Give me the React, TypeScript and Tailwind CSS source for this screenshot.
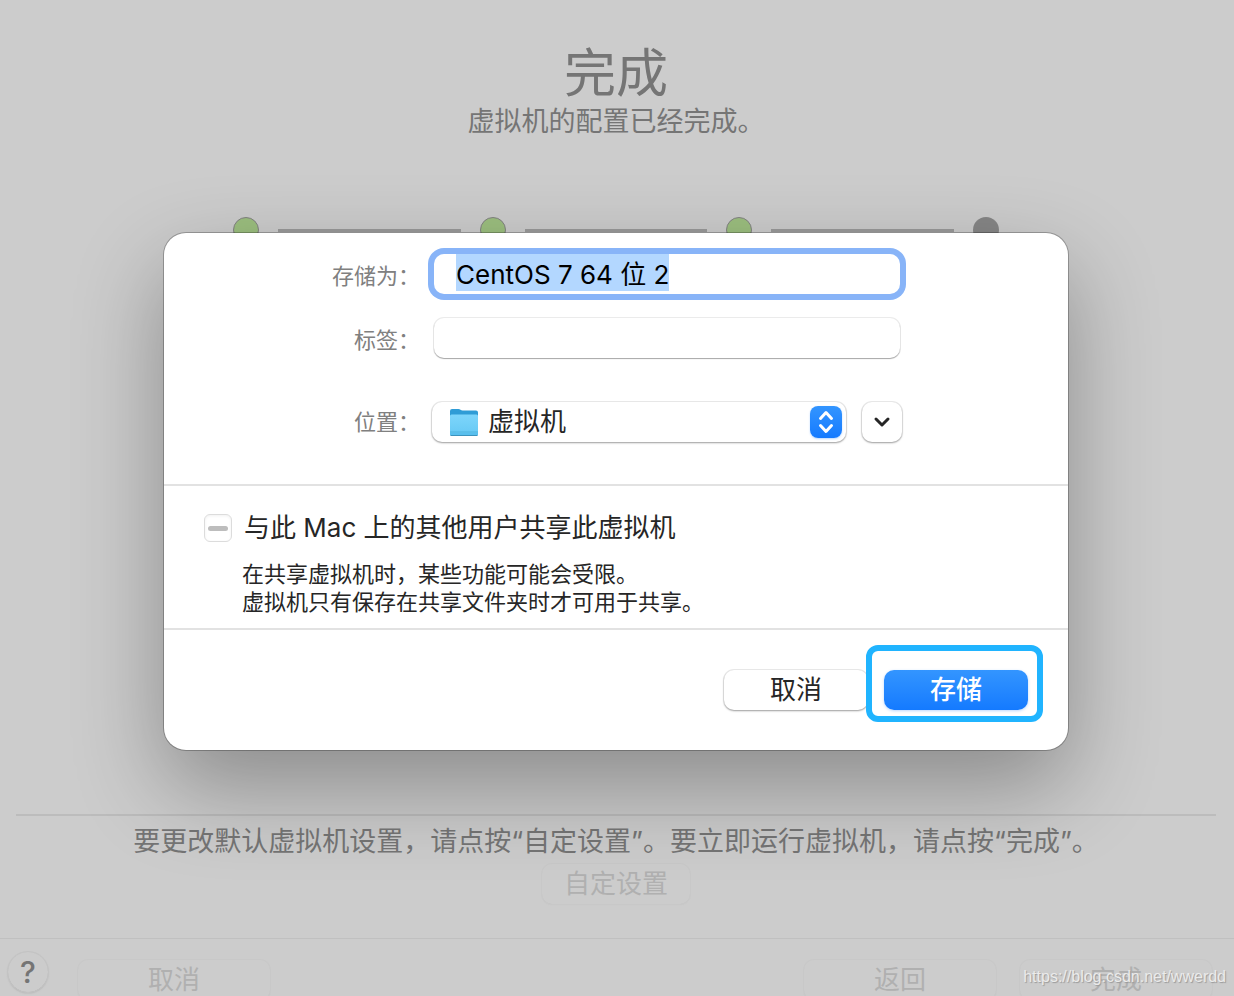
import { useEffect, useRef } from 'react'
import { ChevronDown } from 'lucide-react'

const FolderIcon = () => (
  <svg viewBox="0 0 30 30" className="pointer-events-none absolute left-[17px] top-1.5 h-[30px] w-[30px]">
    <defs>
      <linearGradient id="folder" x1="0" y1="0" x2="0" y2="1">
        <stop offset="0" stopColor="#7dd5fb" />
        <stop offset="1" stopColor="#66c9f4" />
      </linearGradient>
    </defs>
    <path d="M1 3a2 2 0 0 1 2-2h6.500c1.500 0 2.500 1.500 4 1.500H27a2 2 0 0 1 2 2V10H1z" fill="#2f9cd6" />
    <path d="M1 8a1.500 1.500 0 0 1 1.500-1.500h25A1.500 1.500 0 0 1 29 8v19H1z" fill="url(#folder)" />
    <path d="M1 24h28" stroke="#4fb2de" strokeWidth="1" />
    <path d="M1 25h28v1.500a1 1 0 0 1-1 1H2a1 1 0 0 1-1-1z" fill="#58bfee" />
    <path d="M1.500 27.500h27" stroke="#3c93bd" strokeWidth="1" />
  </svg>
)

const UpDownIcon = () => (
  <span className="pointer-events-none absolute right-1 top-1 flex h-8 w-8 items-center justify-center rounded-lg bg-linear-to-b from-[#3395ff] to-[#147aff] shadow-[0_1px_2px_rgba(20,122,255,0.3)]">
    <svg viewBox="0 0 32 32" className="h-8 w-8" fill="none" stroke="#fff" strokeWidth="3" strokeLinecap="round" strokeLinejoin="round">
      <path d="M10.500 12.500 16 6.500l5.500 6M10.500 19.500l5.500 6 5.500-6" />
    </svg>
  </span>
)

const Steps = () => {
  const line = <span className="h-[3px] flex-1 bg-[#9a9a9a]" />
  const done = <span className="h-[26px] w-[26px] rounded-full border border-[#828282] bg-[#9cbf7f]" />
  return (
    <div className="mx-auto mt-[77px] flex w-[766px] max-w-full items-center gap-[19px]">
      {done}
      {line}
      {done}
      {line}
      {done}
      {line}
      <span className="h-[26px] w-[26px] rounded-full bg-[#868686]" />
    </div>
  )
}

const SaveSheet = () => {
  const nameRef = useRef<HTMLInputElement>(null)
  const shareRef = useRef<HTMLInputElement>(null)

  useEffect(() => {
    nameRef.current?.focus()
    nameRef.current?.select()
    if (shareRef.current) shareRef.current.indeterminate = true
  }, [])

  const label = 'w-[256px] shrink-0 text-right text-[22px] leading-[44px] text-[#808080]'

  return (
    <div
      role="dialog"
      aria-label="存储为"
      className="w-[904px] max-w-full rounded-[22px] bg-white shadow-[0_0_0_1px_rgba(0,0,0,0.25),0_36px_90px_rgba(0,0,0,0.32)]"
    >
      {/* Name, tags and location */}
      <div className="border-b-2 border-[#e2e2e2] pb-10 pt-[21px]">
        <div className="flex items-start gap-3.5">
          <label htmlFor="name" className={label}>存储为：</label>
          <input
            id="name"
            ref={nameRef}
            defaultValue="CentOS 7 64 位 2"
            className="h-10 w-[466px] rounded-[10px] bg-white px-[22px] pb-1 text-[26px] text-black outline-none ring-6 ring-[#88b4f8] selection:bg-[#b3d7ff] selection:text-black"
          />
        </div>
        <div className="mt-5 flex items-start gap-3.5">
          <label htmlFor="tags" className={label}>标签：</label>
          <input
            id="tags"
            className="h-10 w-[466px] rounded-[10px] bg-white px-[22px] text-[26px] shadow-[0_1px_1px_#a8a8a8,0_0_0_1px_#ebebeb] outline-none"
          />
        </div>
        <div className="mt-[38px] flex items-center gap-3">
          <label htmlFor="place" className={label}>位置：</label>
          <div className="relative mr-1">
            <select
              id="place"
              className="block h-10 w-[414px] appearance-none rounded-[10px] bg-white pl-14 pr-12 text-[26px] leading-10 text-[#262626] shadow-[0_1px_2px_#a0a0a0,0_0_0_1px_#ebebeb] outline-none"
            >
              <option>虚拟机</option>
            </select>
            <FolderIcon />
            <UpDownIcon />
          </div>
          <button
            aria-label="展开"
            className="flex h-10 w-10 items-center justify-center rounded-[10px] bg-white shadow-[0_1px_2px_#a0a0a0,0_0_0_1px_#ebebeb]"
          >
            <ChevronDown className="h-6 w-6 text-[#262626]" strokeWidth={3} />
          </button>
        </div>
      </div>

      {/* Sharing */}
      <div className="border-b-2 border-[#e2e2e2] pb-3 pl-10 pt-[22px]">
        <div className="flex items-center gap-3">
          <input
            id="share"
            ref={shareRef}
            type="checkbox"
            className="grid h-7 w-7 appearance-none place-content-center rounded-md border border-[#dcdcdc] bg-white shadow-[inset_0_1px_3px_rgba(0,0,0,0.06)] before:h-[5px] before:w-5 before:rounded-full before:bg-[#bdbdbd] before:content-['']"
          />
          <label htmlFor="share" className="text-[26px] leading-10 text-[#262626]">
            与此 Mac 上的其他用户共享此虚拟机
          </label>
        </div>
        <p className="mt-3 pl-[38px] text-[22px] leading-7 text-[#262626]">
          在共享虚拟机时，某些功能可能会受限。
          <br />
          虚拟机只有保存在共享文件夹时才可用于共享。
        </p>
      </div>

      {/* Actions */}
      <div className="flex justify-end gap-4 pb-10 pr-10 pt-10">
        <button className="h-10 w-36 rounded-[10px] bg-white text-[26px] leading-10 text-[#262626] shadow-[0_1px_2px_#a0a0a0,0_0_0_1px_#ebebeb]">
          取消
        </button>
        <div className="relative">
          <button className="block h-10 w-36 rounded-[10px] bg-linear-to-b from-[#3395ff] to-[#147aff] text-[26px] font-medium leading-10 text-white shadow-[0_1px_3px_rgba(20,122,255,0.3)]">
            存储
          </button>
          <span className="pointer-events-none absolute -bottom-3 -left-[18px] -right-[15px] -top-[25px] rounded-xl border-6 border-[#20b4ff]" />
        </div>
      </div>
    </div>
  )
}

const App = () => {
  const disabled =
    'h-10 rounded-[10px] text-[26px] leading-10 text-[#b0b0b0] shadow-[0_0_0_1px_#c8c8c8,0_1px_1px_#c0c0c0]'

  return (
    <main
      lang="zh-CN"
      className="relative flex h-screen flex-col overflow-hidden bg-[#cccccc] font-['Inter','Noto_Sans_CJK_SC',sans-serif] text-[#757575]"
    >
      <header className="pr-0.5 pt-[42px] text-center">
        <h1 className="text-[52px] leading-[64px]">完成</h1>
        <p className="text-[27px] leading-8">虚拟机的配置已经完成。</p>
      </header>
      <div className="pr-0.5 pt-0.5">
        <Steps />
      </div>

      {/* Save sheet over the assistant window */}
      <div className="absolute inset-x-0 top-[233px] flex justify-center pr-0.5">
        <SaveSheet />
      </div>

      <section className="ml-4 mr-[18px] mt-auto border-t-2 border-black/8 pb-[34px] text-center">
        <p className="mt-2 text-[27px] leading-9">
          要更改默认虚拟机设置，请点按“自定设置”。要立即运行虚拟机，请点按“完成”。
        </p>
        <button disabled className={`${disabled} mt-1 w-[148px]`}>自定设置</button>
      </section>

      <footer className="flex h-[58px] shrink-0 items-start border-t border-[#c0c0c0] pl-2 pr-[22px]">
        <button
          aria-label="帮助"
          className="mt-[13px] h-10 w-10 shrink-0 rounded-full text-[30px] font-medium leading-10 shadow-[0_0_0_1px_#c3c3c3,0_1px_2px_#a8a8a8]"
        >
          ?
        </button>
        <button disabled className={`${disabled} ml-[30px] mr-auto mt-[21px] w-48`}>取消</button>
        <button disabled className={`${disabled} mt-[21px] w-48`}>返回</button>
        <button disabled className={`${disabled} ml-6 mt-[21px] w-48`}>完成</button>
      </footer>

      <a
        href="https://blog.csdn.net/wwerdd"
        className="absolute bottom-[7px] right-2 font-['Liberation_Sans',sans-serif] text-base text-[#ebebeb] [text-shadow:1px_1px_1px_#999]"
      >
        https://blog.csdn.net/wwerdd
      </a>
    </main>
  )
}

export default App
